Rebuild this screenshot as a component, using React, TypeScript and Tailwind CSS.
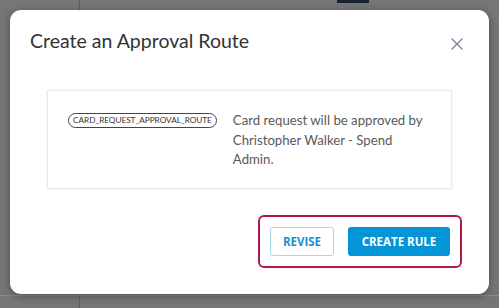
import React from "react";

export default function App() {
  return (
    <div className="relative w-[499px] h-[308px] overflow-hidden bg-[#767676]" style={{ fontFamily: "Lato, 'Noto Sans', sans-serif" }}>
      <div className="absolute left-[79px] top-0 h-full w-px bg-[#5e5e5e]" />
      <div className="absolute left-[337px] top-0 h-[3px] w-[32px] bg-[#1a2230]" />
      <div className="absolute left-0 top-[295px] h-px w-full bg-[#8a8a8a]" />
      <div className="relative ml-[10px] mt-[10px] flex h-[284px] w-[479px] flex-col rounded-[11px] bg-white shadow-[0_2px_8px_rgba(0,0,0,0.35)]">
        <div className="flex items-start justify-between pl-[20px] pr-[26px] pt-[19px]">
          <h1 className="text-[19.5px] leading-[24px] text-[#333333]">Create an Approval Route</h1>
          <svg className="mt-[9px]" width="12" height="12" viewBox="0 0 12 12" fill="none" stroke="#7a8796" strokeWidth="1.4" strokeLinecap="round">
            <path d="M1 1L11 11M11 1L1 11" />
          </svg>
        </div>
        <div className="mx-[37px] mt-[37px] flex h-[99px] border border-[#e6eaef] shadow-[0_0_3px_rgba(0,0,0,0.06)]">
          <div className="flex items-start pl-[20px] pt-[22px]">
            <span className="flex h-[15px] items-center rounded-full border border-[#444] px-[4px] text-[8.2px] leading-none text-[#333]">
              CARD_REQUEST_APPROVAL_ROUTE
            </span>
          </div>
          <p className="ml-[16px] w-[200px] pt-[20px] text-[13.2px] leading-[19.5px] text-[#5a5a5a]">
            Card request will be approved by Christopher Walker - Spend Admin.
          </p>
        </div>
        <div className="mt-auto mb-[26px] mr-[27px] flex justify-end">
          <div className="flex gap-[14px] rounded-[6px] border-2 border-[#b3174b] p-[10px]">
            <button className="h-[29px] w-[64px] rounded-[3px] border border-[#a3d6f1] bg-white text-[11.5px] font-bold text-[#1a8fd3]" style={{ fontFamily: "'Open Sans', sans-serif" }}>
              REVISE
            </button>
            <button className="h-[29px] w-[102px] rounded-[3px] bg-[#0495d7] text-[11.5px] font-bold text-white" style={{ fontFamily: "'Open Sans', sans-serif" }}>
              CREATE RULE
            </button>
          </div>
        </div>
      </div>
    </div>
  );
}
